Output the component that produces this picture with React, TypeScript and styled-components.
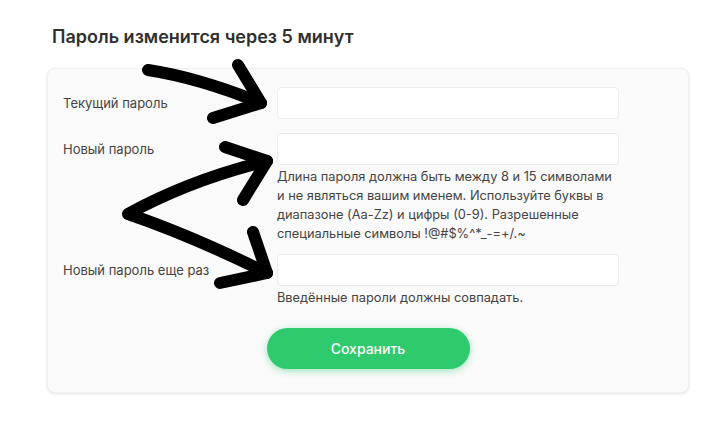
import React from 'react';
import styled, { createGlobalStyle } from 'styled-components';

const GlobalStyle = createGlobalStyle`
  html, body {
    margin: 0;
    padding: 0;
    background: #ffffff;
  }
  body {
    font-family: Inter, "Noto Sans", "Liberation Sans", sans-serif;
    color: #333;
  }
`;

const Page = styled.div`
  position: relative;
  width: 720px;
  height: 421px;
  box-sizing: border-box;
  padding: 26px 31px 0 47px;
  overflow: hidden;
`;

const Title = styled.h1`
  margin: 0 0 20px 5px;
  font-size: 18px;
  line-height: 22px;
  font-weight: 600;
  color: #2f2f2f;
`;

const Card = styled.form`
  width: 642px;
  height: 325px;
  box-sizing: border-box;
  padding: 18px 15px 23px;
  background: #fafafa;
  border: 1px solid #f0f0f0;
  border-radius: 8px;
  box-shadow: 0 1px 3px rgba(0, 0, 0, 0.12);
  display: flex;
  flex-direction: column;
`;

const FieldRow = styled.div<{ gap: number }>`
  display: grid;
  grid-template-columns: 214px 342px;
  margin-top: ${({ gap }) => gap}px;
`;

const Label = styled.label`
  font-size: 13px;
  line-height: 32px;
  color: #444;
  white-space: nowrap;
`;

const FieldColumn = styled.div`
  display: flex;
  flex-direction: column;
`;

const Input = styled.input`
  width: 342px;
  height: 32px;
  box-sizing: border-box;
  background: #fff;
  border: 1px solid #ececec;
  border-radius: 4px;
  outline: none;
  padding: 0 10px;
`;

const Hint = styled.p`
  margin: 2px 0 0;
  max-width: 337px;
  font-size: 12.8px;
  line-height: 19px;
  color: #444;
`;

const SaveButton = styled.button`
  align-self: center;
  margin-top: 21px;
  width: 203px;
  height: 43px;
  border: none;
  border-radius: 22px;
  background: #2fca6e;
  color: #fff;
  font-family: inherit;
  font-size: 14px;
  font-weight: 500;
  box-shadow: 0 2px 7px rgba(47, 202, 110, 0.45);
  cursor: pointer;
`;

const Scribble = styled.svg`
  position: absolute;
  left: 0;
  top: 0;
  pointer-events: none;
`;

const strokes = [
  'M148 70 Q200 78 261 103',
  'M238 65 L261 103 L213 118',
  'M267 161 Q190 180 128 214 Q190 235 267 273',
  'M225 147 L267 161 L243 200',
  'M253 232 L267 273 L220 283',
];

const App: React.FC = () => {
  return (
    <>
      <GlobalStyle />
      <Page>
        <Title>Пароль изменится через 5 минут</Title>
        <Card onSubmit={(e) => e.preventDefault()}>
          <FieldRow gap={0}>
            <Label>Текущий пароль</Label>
            <FieldColumn>
              <Input type="password" />
            </FieldColumn>
          </FieldRow>
          <FieldRow gap={14}>
            <Label>Новый пароль</Label>
            <FieldColumn>
              <Input type="password" />
              <Hint>
                Длина пароля должна быть между 8 и 15 символами и не являться вашим именем.
                Используйте буквы в диапазоне (Aa-Zz) и цифры (0-9). Разрешенные специальные
                символы !@#$%^*_-=+/.~
              </Hint>
            </FieldColumn>
          </FieldRow>
          <FieldRow gap={11}>
            <Label>Новый пароль еще раз</Label>
            <FieldColumn>
              <Input type="password" />
              <Hint>Введённые пароли должны совпадать.</Hint>
            </FieldColumn>
          </FieldRow>
          <SaveButton type="submit">Сохранить</SaveButton>
        </Card>
        <Scribble width="720" height="421" viewBox="0 0 720 421">
          {strokes.map((d) => (
            <path
              key={d}
              d={d}
              fill="none"
              stroke="#000"
              strokeWidth={12}
              strokeLinecap="round"
              strokeLinejoin="round"
            />
          ))}
        </Scribble>
      </Page>
    </>
  );
};

export default App;
